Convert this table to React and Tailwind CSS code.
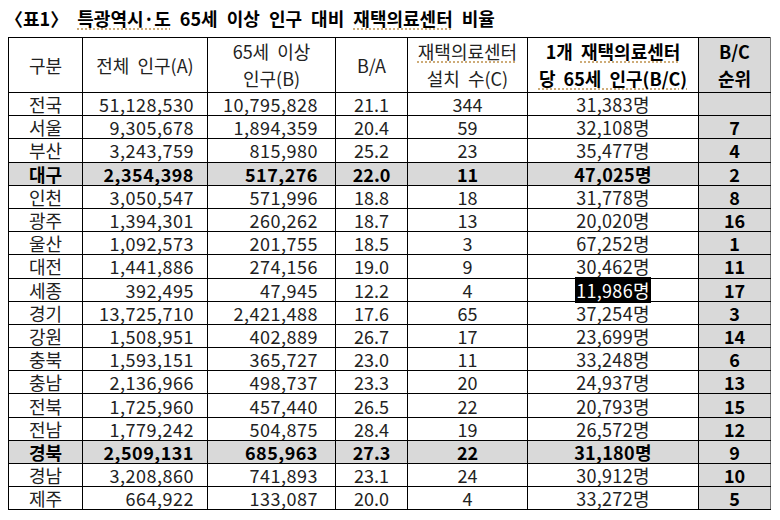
import React from "react";

const rows = [
  ["전국", "51,128,530", "10,795,828", "21.1", "344", "31,383명", ""],
  ["서울", "9,305,678", "1,894,359", "20.4", "59", "32,108명", "7"],
  ["부산", "3,243,759", "815,980", "25.2", "23", "35,477명", "4"],
  ["대구", "2,354,398", "517,276", "22.0", "11", "47,025명", "2", true],
  ["인천", "3,050,547", "571,996", "18.8", "18", "31,778명", "8"],
  ["광주", "1,394,301", "260,262", "18.7", "13", "20,020명", "16"],
  ["울산", "1,092,573", "201,755", "18.5", "3", "67,252명", "1"],
  ["대전", "1,441,886", "274,156", "19.0", "9", "30,462명", "11"],
  ["세종", "392,495", "47,945", "12.2", "4", "11,986명", "17"],
  ["경기", "13,725,710", "2,421,488", "17.6", "65", "37,254명", "3"],
  ["강원", "1,508,951", "402,889", "26.7", "17", "23,699명", "14"],
  ["충북", "1,593,151", "365,727", "23.0", "11", "33,248명", "6"],
  ["충남", "2,136,966", "498,737", "23.3", "20", "24,937명", "13"],
  ["전북", "1,725,960", "457,440", "26.5", "22", "20,793명", "15"],
  ["전남", "1,779,242", "504,875", "28.4", "19", "26,572명", "12"],
  ["경북", "2,509,131", "685,963", "27.3", "22", "31,180명", "9", true],
  ["경남", "3,208,860", "741,893", "23.1", "24", "30,912명", "10"],
  ["제주", "664,922", "133,087", "20.0", "4", "33,272명", "5"],
];

// spell-check style dotted underline seen in the original document
const sp = "underline decoration-dotted decoration-[#c9a36a] underline-offset-[3px]";

const App = () => {
  return (
    <div
      className="w-[780px] h-[520px] bg-white text-[#222] overflow-hidden [word-spacing:4px]"
      style={{ fontFamily: '"Noto Sans CJK KR", "Noto Sans", sans-serif' }}
    >
      <div className="pl-[5px] pt-[5px] h-[37px] text-[18px] font-bold leading-[26px] text-black [word-spacing:5px]">
        〈표1〉 <span className={sp}>특광역시·도</span> 65세 이상 인구 대비{" "}
        <span className={sp}>재택의료센터</span> 비율
      </div>

      <table className="ml-[8px] w-[762px] table-fixed border-collapse border border-black text-[18px]">
        <colgroup>
          <col className="w-[74px]" />
          <col className="w-[125px]" />
          <col className="w-[128px]" />
          <col className="w-[72px]" />
          <col className="w-[120px]" />
          <col className="w-[171px]" />
          <col className="w-[72px]" />
        </colgroup>
        <thead>
          <tr className="h-[55px] leading-[27px]">
            <th className="border border-black font-normal">구분</th>
            <th className="border border-black font-normal">전체 인구(A)</th>
            <th className="border border-black font-normal">
              65세 이상
              <br />
              인구(B)
            </th>
            <th className="border border-black font-normal">B/A</th>
            <th className="border border-black font-normal">
              <span className={sp}>재택의료센터</span>
              <br />
              설치 수(C)
            </th>
            <th className="border border-black font-bold text-black">
              1개 <span className={sp}>재택의료센터</span>
              <br />
              <span className={sp}>당 65세 인구(B/C)</span>
            </th>
            <th className="border border-black border-r-[#777] bg-[#d9d9d9] font-bold text-black">
              B/C
              <br />
              순위
            </th>
          </tr>
        </thead>
        <tbody>
          {rows.map((r, i) => {
            const hl = r[7];
            return (
              <tr
                key={i}
                className={`h-[23.2px] leading-[22px] ${hl ? "bg-[#d9d9d9] font-bold text-black" : ""}`}
              >
                <td className="border border-black text-center">{r[0]}</td>
                <td className="border border-black text-right pr-[13px] tracking-[0.5px]">{r[1]}</td>
                <td className="border border-black text-right pr-[17px] tracking-[0.5px]">{r[2]}</td>
                <td className="border border-black text-center">{r[3]}</td>
                <td className="border border-black text-center">{r[4]}</td>
                <td className="border border-black text-center tracking-[0.3px]">
                  {r[0] === "세종" ? (
                    <span className="bg-black text-white px-[1px]">{r[5]}</span>
                  ) : (
                    r[5]
                  )}
                </td>
                <td className="border border-black border-r-[#777] bg-[#d9d9d9] text-center font-bold text-black">
                  {r[6]}
                </td>
              </tr>
            );
          })}
        </tbody>
      </table>
    </div>
  );
};

export default App;
